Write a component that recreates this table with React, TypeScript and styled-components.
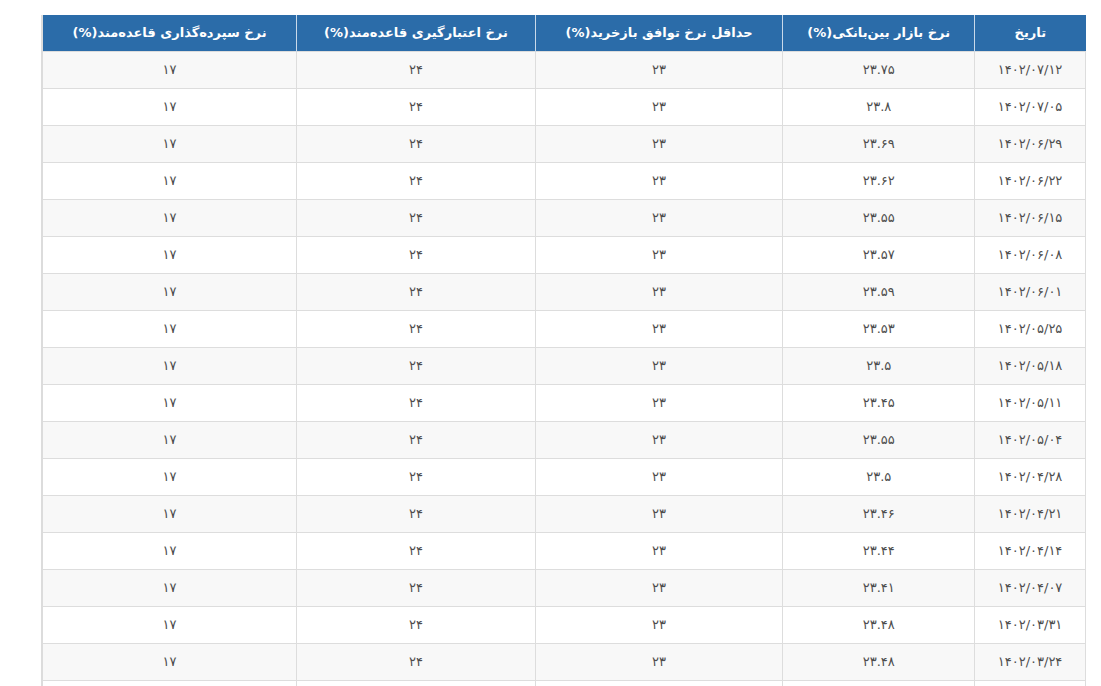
import React from "react";
import styled, { createGlobalStyle } from "styled-components";

const GlobalStyle = createGlobalStyle`
  html, body {
    margin: 0;
    padding: 0;
    background: #ffffff;
  }
`;

const Page = styled.div`
  padding: 15px 15px 0 41px;
  direction: rtl;
  font-family: "DejaVu Sans", "Noto Sans", sans-serif;
`;

const Table = styled.table`
  width: 1045px;
  border-collapse: collapse;
  direction: rtl;
  border-left: 2px solid #dcdcdc;
`;

const HeadCell = styled.th<{ w: number }>`
  width: ${({ w }) => w}px;
  height: 36px;
  padding: 0;
  background-color: #2b6ca9;
  color: #ffffff;
  font-size: 13px;
  font-weight: bold;
  text-align: center;
  vertical-align: middle;
  border-left: 1px solid #c9d9ea;
  box-sizing: border-box;
`;

const Row = styled.tr<{ striped: boolean }>`
  background-color: ${({ striped }) => (striped ? "#f8f8f8" : "#ffffff")};
`;

const Cell = styled.td`
  height: 37px;
  padding: 0;
  text-align: center;
  vertical-align: middle;
  font-size: 13px;
  color: #4d4d4d;
  border: 1px solid #dddddd;
  box-sizing: border-box;
`;

const faDigits = "۰۱۲۳۴۵۶۷۸۹";
const toFa = (s: string) => s.replace(/[0-9]/g, (d) => faDigits[Number(d)]);

const columns = [
  { title: "تاریخ", w: 111 },
  { title: "نرخ بازار بین‌بانکی(%)", w: 192 },
  { title: "حداقل نرخ توافق بازخرید(%)", w: 248 },
  { title: "نرخ اعتبارگیری قاعده‌مند(%)", w: 239 },
  { title: "نرخ سپرده‌گذاری قاعده‌مند(%)", w: 255 },
];

const rows: [string, string][] = [
  ["1402/07/12", "23.75"],
  ["1402/07/05", "23.8"],
  ["1402/06/29", "23.69"],
  ["1402/06/22", "23.62"],
  ["1402/06/15", "23.55"],
  ["1402/06/08", "23.57"],
  ["1402/06/01", "23.59"],
  ["1402/05/25", "23.53"],
  ["1402/05/18", "23.5"],
  ["1402/05/11", "23.45"],
  ["1402/05/04", "23.55"],
  ["1402/04/28", "23.5"],
  ["1402/04/21", "23.46"],
  ["1402/04/14", "23.44"],
  ["1402/04/07", "23.41"],
  ["1402/03/31", "23.48"],
  ["1402/03/24", "23.48"],
  ["1402/03/17", "23.45"],
];

const App = (): JSX.Element => {
  return (
    <>
      <GlobalStyle />
      <Page>
        <Table>
          <thead>
            <tr>
              {columns.map((c) => (
                <HeadCell key={c.title} w={c.w}>
                  {c.title}
                </HeadCell>
              ))}
            </tr>
          </thead>
          <tbody>
            {rows.map(([date, rate], i) => (
              <Row key={date} striped={i % 2 === 0}>
                <Cell>{toFa(date)}</Cell>
                <Cell>{toFa(rate)}</Cell>
                <Cell>{toFa("23")}</Cell>
                <Cell>{toFa("24")}</Cell>
                <Cell>{toFa("17")}</Cell>
              </Row>
            ))}
          </tbody>
        </Table>
      </Page>
    </>
  );
};

export default App;
